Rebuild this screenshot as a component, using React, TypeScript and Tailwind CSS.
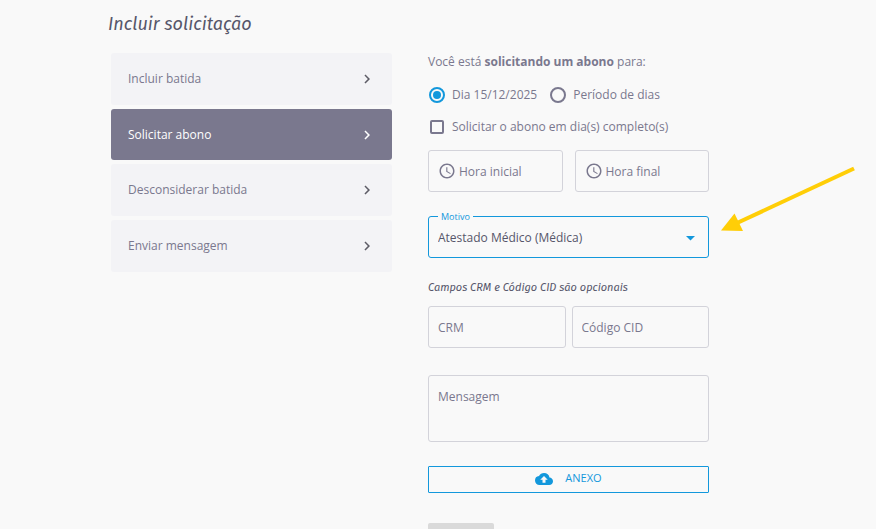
import React, { useState } from 'react';
import { MdAccessTime, MdChevronRight, MdCloudUpload } from 'react-icons/md';

const menuItems = ['Incluir batida', 'Solicitar abono', 'Desconsiderar batida', 'Enviar mensagem'];

const fieldClass =
    'h-[42px] w-full min-w-0 rounded-[3px] border border-[#d3d3da] bg-transparent px-[9px] outline-none placeholder:text-[#7a788e]';

const radioClass =
    'grid size-4 appearance-none place-content-center rounded-full border-2 border-[#7a788e] before:size-2 before:rounded-full checked:border-[#1398dc] checked:before:bg-[#1398dc]';

const TimeField = ({ label }: { label: string }) => (
    <label className="flex h-[42px] min-w-0 flex-1 items-center gap-[3px] rounded-[3px] border border-[#d3d3da] pl-[9px]">
        <MdAccessTime className="size-[18px] shrink-0" />
        <input type="text" aria-label={label} placeholder={label} className="w-full min-w-0 bg-transparent pt-[2px] outline-none placeholder:text-[#7a788e]" />
    </label>
);

const Arrow = () => (
    <svg className="pointer-events-none absolute -top-[50px] left-full ml-3 h-[68px] w-[136px]" viewBox="0 0 136 68" aria-hidden="true">
        <path d="M133 2.5 L16 57" stroke="#ffce07" strokeWidth="4" />
        <path d="M0 64.5 L13.5 47.5 L22 65Z" fill="#ffce07" />
    </svg>
);

const App = () => {
    const [active, setActive] = useState('Solicitar abono');
    const [period, setPeriod] = useState('dia');

    return (
        <main className="min-h-screen overflow-hidden bg-[#f9f9f9] pt-[10px] font-['Open_Sans',sans-serif] text-[12px] leading-[18px] text-[#7a788e]">
            <h1 className="pl-[108px] font-['Fira_Sans','Noto_Sans',sans-serif] text-[18px] leading-[28px] text-[#56566a] italic">
                Incluir solicitação
            </h1>
            <div className="mt-[15px] grid grid-cols-2 gap-9 pr-[167px] pl-[111px]">
                <nav className="flex flex-col gap-1">
                    {menuItems.map((item) => (
                        <button
                            key={item}
                            type="button"
                            onClick={() => setActive(item)}
                            className={`flex items-center justify-between rounded-[3px] pr-4 pl-[17px] ${
                                item === active ? 'h-[51px] bg-[#7a788e] text-white' : 'h-[52px] bg-[#f3f3f6]'
                            }`}
                        >
                            {item}
                            <MdChevronRight className={`size-[18px] ${item === active ? 'text-white' : 'text-[#5d5c66]'}`} />
                        </button>
                    ))}
                </nav>

                <form className="flex flex-col">
                    <p>
                        Você está <strong className="font-bold">solicitando um abono</strong> para:
                    </p>

                    <div className="mt-[15px] flex gap-[13px] pl-px">
                        <label className="flex items-center gap-[7px]">
                            <input type="radio" name="period" className={radioClass} checked={period === 'dia'} onChange={() => setPeriod('dia')} />
                            Dia 15/12/2025
                        </label>
                        <label className="flex items-center gap-[7px]">
                            <input type="radio" name="period" className={radioClass} checked={period === 'periodo'} onChange={() => setPeriod('periodo')} />
                            Período de dias
                        </label>
                    </div>

                    <label className="mt-[14px] flex items-center gap-2 pl-[2px]">
                        <input type="checkbox" className="size-[14px] appearance-none rounded-[2px] border-2 border-[#7a788e] checked:bg-[#1398dc]" />
                        Solicitar o abono em dia(s) completo(s)
                    </label>

                    <div className="mt-[14px] flex gap-3">
                        <TimeField label="Hora inicial" />
                        <TimeField label="Hora final" />
                    </div>

                    <div className="relative mt-6">
                        <label htmlFor="motivo" className="absolute -top-[5px] left-[10px] bg-[#f9f9f9] px-[3px] text-[9px] leading-[12px] text-[#1398dc]">
                            Motivo
                        </label>
                        <select id="motivo" className="h-[42px] w-full appearance-none rounded-[3px] border border-[#1398dc] bg-transparent px-[9px] pt-[2px] text-[#56566a] outline-none">
                            <option>Atestado Médico (Médica)</option>
                        </select>
                        <svg className="pointer-events-none absolute top-5 right-[14px] h-[5px] w-[9px]" viewBox="0 0 9 5" fill="#1398dc" aria-hidden="true">
                            <path d="M0 0h9L4.5 4.6z" />
                        </svg>
                        <Arrow />
                    </div>

                    <p className="mt-[21px] font-['Fira_Sans','Noto_Sans',sans-serif] text-[11px] text-[#56566a] italic">
                        Campos CRM e Código CID são opcionais
                    </p>

                    <div className="mt-[9px] flex gap-[6px]">
                        <input type="text" aria-label="CRM" placeholder="CRM" className={fieldClass} />
                        <input type="text" aria-label="Código CID" placeholder="Código CID" className={fieldClass} />
                    </div>

                    <textarea
                        aria-label="Mensagem"
                        placeholder="Mensagem"
                        className="mt-[27px] h-[67px] resize-none rounded-[3px] border border-[#d3d3da] bg-transparent px-[9px] py-3 outline-none placeholder:text-[#7a788e]"
                    />

                    <button
                        type="button"
                        className="mt-6 flex h-[27px] items-center justify-center gap-3 rounded-[1px] border border-[#1398dc] pb-px text-[11px] font-medium text-[#1398dc]"
                    >
                        <MdCloudUpload className="size-[18px]" />
                        <span className="pb-[2px]">ANEXO</span>
                    </button>

                    <button type="submit" disabled aria-label="Enviar" className="mt-[30px] h-7 w-[66px] rounded-[2px] bg-[#dadada]" />
                </form>
            </div>
        </main>
    );
};

export default App;
